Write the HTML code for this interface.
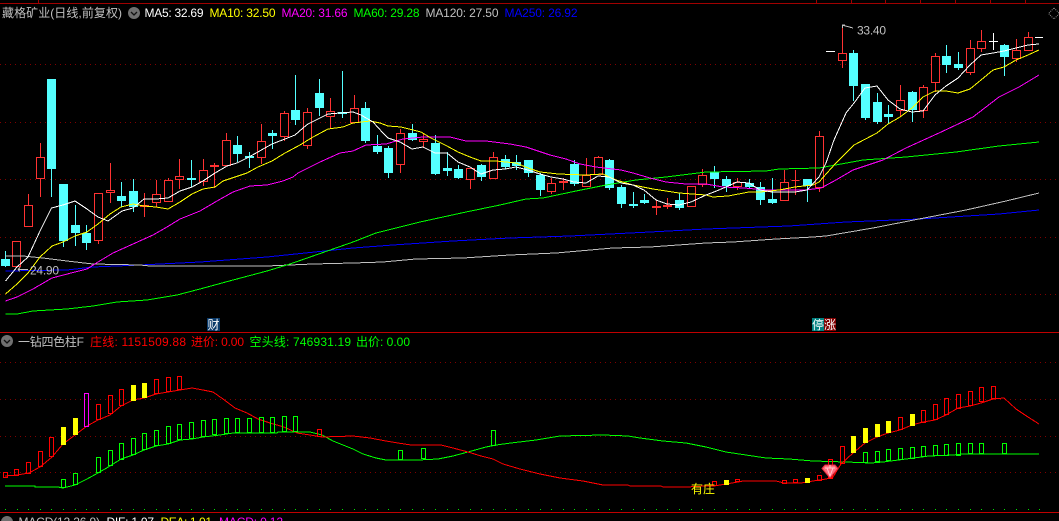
<!DOCTYPE html>
<html><head><meta charset="utf-8"><title>藏格矿业</title>
<style>
html,body{margin:0;padding:0;background:#000;width:1059px;height:521px;overflow:hidden}
svg{display:block}
text{font-family:"Liberation Sans","WenQuanYi Zen Hei","Noto Sans CJK SC",sans-serif;font-size:12px}
</style></head><body>
<svg width="1059" height="521" viewBox="0 0 1059 521" xmlns="http://www.w3.org/2000/svg">
<rect width="1059" height="521" fill="#000"/>
<g shape-rendering="crispEdges">
<!-- frame -->
<path d="M0 3.5H1059" stroke="#a00000"/>
<path d="M38.5 0V3M816.5 0V3M851.5 0V3M885.5 0V3M920.5 0V3M955.5 0V3M990.5 0V3M1025.5 0V3" stroke="#a00000"/>
<path d="M0 332.5H1059M0 512.5H1059" stroke="#c00000"/>
<path d="M0 64.5H1059M0 122.5H1059M0 179.5H1059M0 237.5H1059M0 294.5H1059M0 362.5H1059M0 399.5H1059M0 436.5H1059M0 472.5H1059" stroke="#800000" stroke-dasharray="1 4"/>
<path d="M5 509.5h1M17 509.5h1M28 509.5h1M40 509.5h1M51 509.5h1M63 509.5h1M75 509.5h1M86 509.5h1M98 509.5h1M110 509.5h1M121 509.5h1M133 509.5h1M144 509.5h1M156 509.5h1M168 509.5h1M179 509.5h1M191 509.5h1M203 509.5h1M214 509.5h1M226 509.5h1M237 509.5h1M249 509.5h1M261 509.5h1M272 509.5h1M284 509.5h1M295 509.5h1M307 509.5h1M319 509.5h1M330 509.5h1M342 509.5h1M354 509.5h1M365 509.5h1M377 509.5h1M388 509.5h1M400 509.5h1M412 509.5h1M423 509.5h1M435 509.5h1M447 509.5h1M458 509.5h1M470 509.5h1M481 509.5h1M493 509.5h1M505 509.5h1M516 509.5h1M528 509.5h1M540 509.5h1M551 509.5h1M563 509.5h1M574 509.5h1M586 509.5h1M598 509.5h1M609 509.5h1M621 509.5h1M633 509.5h1M644 509.5h1M656 509.5h1M667 509.5h1M679 509.5h1M691 509.5h1M702 509.5h1M714 509.5h1M726 509.5h1M737 509.5h1M749 509.5h1M760 509.5h1M772 509.5h1M784 509.5h1M795 509.5h1M807 509.5h1M819 509.5h1M830 509.5h1M842 509.5h1M853 509.5h1M865 509.5h1M877 509.5h1M888 509.5h1M900 509.5h1M912 509.5h1M923 509.5h1M935 509.5h1M946 509.5h1M958 509.5h1M970 509.5h1M981 509.5h1M993 509.5h1M1004 509.5h1M1016 509.5h1M1028 509.5h1M1039 509.5h1" stroke="#00e000"/>
<!-- cyan wicks -->
<path stroke="#54ffff" fill="none" d="M5.5 251V267M51.5 79V197M63.5 184V247M75.5 205V246M86.5 225V250M121.5 182V207M133.5 179V212M191.5 160V187M237.5 136V162M249.5 152V168M272.5 130V149M295.5 75V125M319.5 79V116M342.5 71V118M365.5 102V143M377.5 135V154M388.5 146V178M412.5 124V141M435.5 135V175M447.5 152V176M458.5 165V179M481.5 164V181M505.5 155V169M516.5 155V170M528.5 160V177M540.5 173V196M574.5 160V186M609.5 159V190M621.5 185V208M633.5 192V208M644.5 194V204M679.5 193V210M714.5 166V188M726.5 176V192M749.5 179V188M760.5 182V205M772.5 178V204M807.5 179V202M853.5 50V101M865.5 84V120M877.5 93V124M888.5 105V124M912.5 91V122M946.5 45V73M958.5 52V70M1004.5 44V76"/>
<!-- cyan bodies -->
<path fill="#54ffff" d="M1 259h9V266h-9zM47 79h9V169h-9zM59 184h9V241h-9zM71 225h9V233h-9zM82 233h9V243h-9zM117 196h9V201h-9zM129 191h9V207h-9zM187 178h9V180h-9zM233 145h9V154h-9zM245 156h9V158h-9zM268 133h9V136h-9zM291 110h9V120h-9zM315 93h9V108h-9zM338 112h9V114h-9zM361 108h9V141h-9zM373 146h9V152h-9zM384 148h9V173h-9zM408 133h9V140h-9zM431 143h9V174h-9zM443 168h9V171h-9zM454 169h9V178h-9zM477 165h9V177h-9zM501 159h9V167h-9zM512 162h9V166h-9zM524 160h9V173h-9zM536 175h9V190h-9zM570 164h9V184h-9zM605 160h9V188h-9zM617 187h9V204h-9zM629 204h9V206h-9zM640 200h9V203h-9zM675 200h9V208h-9zM710 172h9V179h-9zM722 179h9V186h-9zM745 183h9V187h-9zM756 187h9V200h-9zM768 199h9V203h-9zM803 179h9V186h-9zM849 53h9V86h-9zM861 84h9V118h-9zM873 102h9V122h-9zM884 114h9V117h-9zM908 92h9V110h-9zM942 56h9V65h-9zM954 64h9V68h-9zM1000 45h9V57h-9z"/>
<!-- red wicks -->
<path stroke="#ff3232" fill="none" d="M28.5 194V205M40.5 143V197M98.5 240V244M110.5 163V203M144.5 193V217M156.5 180V207M168.5 178V181M179.5 159V189M203.5 159V186M214.5 163V188M226.5 133V141M261.5 124V164M284.5 111V141M307.5 108V149M330.5 98V128M354.5 95V109M400.5 129V173M423.5 133V148M470.5 179V189M493.5 152V158M551.5 178V194M563.5 178V190M586.5 158V176M598.5 156V158M656.5 200V215M667.5 198V209M702.5 169V187M737.5 178V190M784.5 170V183M795.5 170V195M819.5 131V192M842.5 25V68M900.5 85V116M923.5 85V118M935.5 53V92M970.5 40V75M981.5 30V52M1016.5 39V62M1028.5 32V38"/>
<!-- red bodies -->
<path stroke="#ff3232" fill="#000" d="M12.5 241.5h8V266.5h-8zM24.5 205.5h8V226.5h-8zM36.5 157.5h8V178.5h-8zM94.5 193.5h8V240.5h-8zM106.5 190.5h8V192.5h-8zM140.5 205.5h8V206.5h-8zM152.5 194.5h8V202.5h-8zM164.5 180.5h8V201.5h-8zM175.5 176.5h8V179.5h-8zM199.5 170.5h8V181.5h-8zM210.5 165.5h8V166.5h-8zM222.5 140.5h8V165.5h-8zM257.5 141.5h8V157.5h-8zM280.5 113.5h8V136.5h-8zM303.5 112.5h8V145.5h-8zM326.5 111.5h8V116.5h-8zM350.5 108.5h8V122.5h-8zM396.5 133.5h8V164.5h-8zM419.5 139.5h8V141.5h-8zM466.5 168.5h8V179.5h-8zM489.5 157.5h8V178.5h-8zM547.5 183.5h8V191.5h-8zM559.5 181.5h8V182.5h-8zM582.5 175.5h8V186.5h-8zM594.5 157.5h8V174.5h-8zM652.5 206.5h8V207.5h-8zM663.5 205.5h8V206.5h-8zM687.5 186.5h8V206.5h-8zM698.5 175.5h8V184.5h-8zM733.5 182.5h8V186.5h-8zM780.5 182.5h8V200.5h-8zM791.5 180.5h8V180.5h-8zM815.5 136.5h8V187.5h-8zM838.5 53.5h8V60.5h-8zM896.5 100.5h8V110.5h-8zM919.5 87.5h8V110.5h-8zM931.5 56.5h8V82.5h-8zM966.5 48.5h8V72.5h-8zM977.5 41.5h8V48.5h-8zM1012.5 50.5h8V58.5h-8zM1024.5 37.5h8V50.5h-8z"/>
<!-- white doji -->
<path stroke="#fff" fill="none" d="M826 51.5h9M989 41.5h9M993.5 33V50M1035 37.5h8"/>
</g>

<!-- moving averages -->
<g fill="none" stroke-width="1" shape-rendering="crispEdges">
<polyline stroke="#0000ff" points="5.5,271 67,270 93,267 140,265 200,262 267,257 353,248 393,245 453,241 510,238 570,236 650,232 706,229 789,226 846,222 919,219 999,214 1039,210"/>
<polyline stroke="#c0c0c0" points="5.5,256 23,256 43,258 67,261 93,264 140,265 150,266 267,266 313,264 353,263 383,262 416,259 463,258 510,255 556,253 613,248 650,247 706,243 733,242 776,239 813,237 826,236 873,228 919,219 966,210 1006,201 1039,193"/>
<polyline stroke="#00ff00" points="5.5,314 17,314 33,311 67,309 93,306 117,302 147,300 177,295 200,289 233,280 267,271 290,264 313,256 353,242 376,233 420,222 466,212 500,205 526,199 543,198 576,191 606,185 636,180 666,177 706,172 766,171 779,169 819,168 863,160 906,157 956,152 999,146 1039,142"/>
<polyline stroke="#ff00ff" points="5.5,301 17,297 33,289 52,278 75,272 87,269 98,262 113,253 133,244 153,235 167,227 180,219 200,211 217,201 233,192 250,186 267,185 283,181 293,177 298,173 320,162 340,153 353,151 366,145 386,144 403,139 423,137 450,137 466,141 486,141 510,144 526,147 550,155 566,159 580,164 596,167 621,170 633,173 650,178 666,182 686,184 706,184 723,187 744,188 766,190 806,190 821,188 836,180 853,170 883,160 906,148 939,133 973,117 999,97 1019,87 1039,75"/>
<polyline stroke="#ffff00" points="5.5,294 17,284 28,273 40,257 52,246 63,242 75,236 87,232 98,224 110,214 121,207 133,204 144,206 156,207 168,209 180,202 192,194 203,189 215,187 223,181 247,173 258,167 272,161 285,153 300,145 313,137 328,129 343,127 353,123 370,121 380,123 388,126 401,127 421,132 431,138 447,146 458,152 470,157 481,161 496,161 516,163 528,168 540,172 558,174 586,175 603,174 616,180 633,185 653,189 679,193 706,195 713,197 728,196 749,192 760,192 779,190 795,187 813,185 819,182 827,173 836,163 854,145 877,133 888,124 900,117 912,108 923,97 935,91 946,91 958,93 970,89 981,80 993,70 1004,67 1016,60 1028,55 1039,50"/>
<polyline stroke="#ffffff" points="5.5,281 17,267 28,257 40,231 51.5,208 63,205 75,201 87,209 98,217 108,221 122,211 133,208 144,199 156,199 168,198 180,191 192,187 203,181 215,173 227,166 237,163 249,157 272,144 285,139 295,135 303,128 308,124 320,118 328,114 340,113 353,112 361,115 373,122 383,133 388,138 400,142 412,149 423,147 435,153 447,153 458,162 470,167 481,174 493,170 505,169 516,167 528,170 540,174 551,177 563,179 574,182 586,183 598,176 609,177 621,183 633,185 644,190 656,200 667,204 679,205 691,202 706,195 714,192 726,187 737,182 749,183 760,190 772,192 795,192 807,190 819,177 826,163 834,140 846,113 854,103 865,88 877,86 888,100 900,109 912,112 923,111 935,95 946,86 958,78 970,65 981,55 993,53 1004,51 1016,48 1028,45 1039,44"/>
</g>

<!-- high / low markers -->
<g fill="none" stroke="#c0c0c0" shape-rendering="crispEdges">
<path d="M842 25L853 28M842.5 25V28M842 25h3"/>
<path d="M18 269.5H28M18 269.5l2-2M18 269.5l2 2"/>
</g>
<text x="857" y="34.5" fill="#c0c0c0" textLength="29" lengthAdjust="spacing">33.40</text>
<text x="30" y="274.5" fill="#c0c0c0" textLength="29" lengthAdjust="spacing">24.90</text>

<!-- top-right diamond -->
<path d="M1054 8l5.5 5.5-5.5 5.5-5.5-5.5z" fill="none" stroke="#888" stroke-dasharray="1 1"/>

<!-- event labels -->
<rect x="207" y="318" width="13" height="13" fill="#0a3a6a"/>
<text x="207.5" y="329" fill="#fff">财</text>
<rect x="812" y="318" width="12" height="13" fill="#008080"/>
<rect x="824" y="318" width="12" height="13" fill="#800000"/>
<text x="812" y="329" fill="#fff">停</text>
<text x="824" y="329" fill="#fff">涨</text>

<!-- lower pane lines -->
<g fill="none" shape-rendering="crispEdges">
<polyline stroke="#00ff00" points="5,486 35,486 35,487 58,487 63,488 75,485 87,479 98,473 110,466 121,459 133,455 144,450 156,446 168,444 180,440 192,439 203,437 220,435 233,433 277,433 278,432 310,432 322,435 333,441 353,449 363,454 376,458 386,460 418,460 438,459 453,456 468,452 486,447 496,445 511,443 536,440 560,436 603,435 628,436 640,438 663,441 686,443 706,447 726,452 746,455 766,458 789,459 813,461 846,462 871,463 883,462 906,459 929,456 953,455 964,454 1039,454"/>
<polyline stroke="#ff0000" points="5,476 17,475 29,473 40,467 52,457 63,444 75,435 87,426 98,420 110,415 121,406 133,400 144,398 156,394 168,392 180,390 192,388 203,390 213,392 223,399 235,408 247,413 258,419 270,423 284,427 297,433 310,435 322,437 353,436 370,438 386,441 398,443 411,445 441,445 453,448 468,452 481,456 493,459 503,464 520,469 540,474 560,478 583,481 603,485 628,485 630,486 661,486 663,487 686,487 706,486 714,486 726,484 738,482 743,481 776,481 784,483 801,483 813,481 826,479 833,477 841,464 853,453 865,443 877,437 888,433 900,430 912,425 923,422 935,420 946,415 958,408 970,406 981,403 993,399 1004,398 1016,409 1028,417 1039,424"/>
<path stroke="#00ff00" d="M61.5 479.5h4V487.5h-4zM73.5 473.5h4V484.5h-4zM96.5 457.5h4V472.5h-4zM108.5 450.5h4V465.5h-4zM119.5 443.5h4V459.5h-4zM131.5 438.5h4V454.5h-4zM142.5 433.5h4V449.5h-4zM154.5 430.5h4V445.5h-4zM166.5 426.5h4V443.5h-4zM177.5 424.5h4V439.5h-4zM189.5 422.5h4V438.5h-4zM201.5 420.5h4V436.5h-4zM212.5 419.5h4V434.5h-4zM224.5 418.5h4V433.5h-4zM235.5 418.5h4V432.5h-4zM247.5 418.5h4V432.5h-4zM259.5 417.5h4V432.5h-4zM270.5 417.5h4V432.5h-4zM282.5 416.5h4V431.5h-4zM293.5 416.5h4V431.5h-4zM398.5 450.5h4V459.5h-4zM421.5 448.5h4V458.5h-4zM491.5 430.5h4V445.5h-4zM863.5 452.5h4V462.5h-4zM875.5 451.5h4V461.5h-4zM886.5 449.5h4V460.5h-4zM898.5 448.5h4V459.5h-4zM910.5 447.5h4V458.5h-4zM921.5 446.5h4V456.5h-4zM933.5 445.5h4V455.5h-4zM944.5 444.5h4V455.5h-4zM956.5 443.5h4V455.5h-4zM968.5 443.5h4V453.5h-4zM979.5 443.5h4V453.5h-4zM1002.5 443.5h4V453.5h-4z"/>
<path stroke="#ff0000" d="M3.5 472.5h4V477.5h-4zM14.5 469.5h4V475.5h-4zM26.5 462.5h4V473.5h-4zM38.5 451.5h4V466.5h-4zM49.5 437.5h4V456.5h-4zM96.5 404.5h4V419.5h-4zM108.5 395.5h4V413.5h-4zM119.5 389.5h4V405.5h-4zM154.5 379.5h4V393.5h-4zM166.5 377.5h4V391.5h-4zM177.5 376.5h4V389.5h-4zM317.5 429.5h4V436.5h-4zM712.5 481.5h4V485.5h-4zM735.5 479.5h4V481.5h-4zM782.5 480.5h4V483.5h-4zM793.5 479.5h4V482.5h-4zM817.5 475.5h4V480.5h-4zM828.5 459.5h4V478.5h-4zM840.5 446.5h4V463.5h-4zM898.5 417.5h4V429.5h-4zM921.5 410.5h4V422.5h-4zM933.5 404.5h4V419.5h-4zM944.5 398.5h4V414.5h-4zM956.5 394.5h4V408.5h-4zM968.5 391.5h4V405.5h-4zM979.5 387.5h4V401.5h-4zM991.5 386.5h4V398.5h-4z"/>
<path stroke="#ff00ff" d="M84.5 393.5h4V426.5h-4z"/>
<path fill="#ffff00" d="M61 427h5V445h-5zM73 418h5V435h-5zM131 385h5V401h-5zM142 383h5V398h-5zM724 480h5V485h-5zM805 478h5V483h-5zM851 436h5V453h-5zM863 428h5V443h-5zM875 424h5V437h-5zM886 421h5V433h-5zM910 414h5V426h-5z"/>
</g>

<!-- diamond marker -->
<path d="M822 468.5l3-3.5h10l3 3.5-8 9.5z" fill="#ff6f80" stroke="#e82a3a" stroke-width="1"/>
<path d="M825 468h10M827 468l3 8 3-8M830 465v3" fill="none" stroke="#ffc8cc" stroke-width="1"/>

<text x="691" y="493" fill="#ffff00" textLength="24" lengthAdjust="spacing">有庄</text>

<!-- header row 1 -->
<text x="2" y="17" fill="#c0c0c0" textLength="120" lengthAdjust="spacing">藏格矿业(日线,前复权)</text>
<circle cx="134" cy="13" r="6" fill="#707070"/>
<path d="M131 12l3 3 3-3" fill="none" stroke="#111" stroke-width="1.3"/>
<text x="144.5" y="17" fill="#ffffff" textLength="59" lengthAdjust="spacing">MA5: 32.69</text>
<text x="209.5" y="17" fill="#ffff00" textLength="66" lengthAdjust="spacing">MA10: 32.50</text>
<text x="281.5" y="17" fill="#ff00ff" textLength="66" lengthAdjust="spacing">MA20: 31.66</text>
<text x="353.5" y="17" fill="#00ff00" textLength="66" lengthAdjust="spacing">MA60: 29.28</text>
<text x="425.5" y="17" fill="#c0c0c0" textLength="73" lengthAdjust="spacing">MA120: 27.50</text>
<text x="504.5" y="17" fill="#0000ff" textLength="73" lengthAdjust="spacing">MA250: 26.92</text>

<!-- header row 2 -->
<circle cx="7" cy="341" r="6" fill="#707070"/>
<path d="M4 340l3 3 3-3" fill="none" stroke="#111" stroke-width="1.3"/>
<text x="18" y="346" fill="#c0c0c0" textLength="66" lengthAdjust="spacing">一钻四色柱F</text>
<text x="90" y="346" fill="#ff0000" textLength="96" lengthAdjust="spacing">庄线: 1151509.88</text>
<text x="191" y="346" fill="#ff0000" textLength="53" lengthAdjust="spacing">进价: 0.00</text>
<text x="249.5" y="346" fill="#00ff00" textLength="101.5" lengthAdjust="spacing">空头线: 746931.19</text>
<text x="356" y="346" fill="#00ff00" textLength="54" lengthAdjust="spacing">出价: 0.00</text>

<!-- header row 3 (clipped) -->
<circle cx="7" cy="522" r="6" fill="#707070"/>
<text x="18.5" y="526" fill="#c0c0c0" textLength="81.5" lengthAdjust="spacing">MACD(12,26,9)</text>
<text x="106.5" y="526" fill="#ffffff" textLength="47.5" lengthAdjust="spacing">DIF: 1.07</text>
<text x="160.5" y="526" fill="#ffff00" textLength="51.5" lengthAdjust="spacing">DEA: 1.01</text>
<text x="219" y="526" fill="#ff00ff" textLength="64" lengthAdjust="spacing">MACD: 0.12</text>
</svg>
</body></html>
